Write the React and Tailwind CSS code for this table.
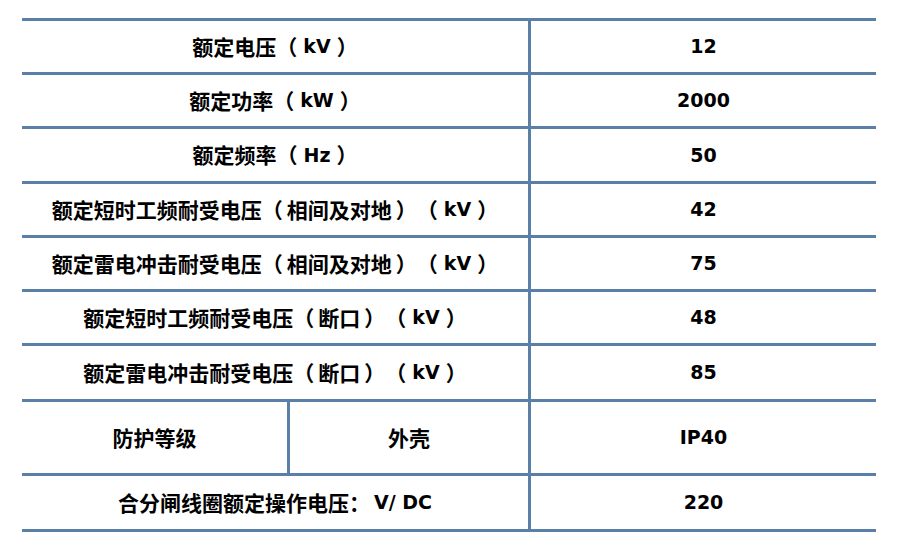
import React from "react";

const rows = [
  { label: "额定电压（kV）", value: "12", h: "h-[54px]" },
  { label: "额定功率（kW）", value: "2000", h: "h-[54px]" },
  { label: "额定频率（Hz）", value: "50", h: "h-[55px]" },
  { label: "额定短时工频耐受电压（相间及对地）（kV）", value: "42", h: "h-[54px]" },
  { label: "额定雷电冲击耐受电压（相间及对地）（kV）", value: "75", h: "h-[54px]" },
  { label: "额定短时工频耐受电压（断口）（kV）", value: "48", h: "h-[54px]" },
  { label: "额定雷电冲击耐受电压（断口）（kV）", value: "85", h: "h-[56px]" },
];

const latin = { fontFamily: '"DejaVu Sans", sans-serif', fontSize: "19px" };

// text inside （） gets some air; latin bits use DejaVu (Verdana-like)
function Label({ text }) {
  const parts = text.split(/（([^）]*)）/);
  return parts.map((part, i) => {
    if (i % 2 === 0) return part;
    const isLatin = /^[A-Za-z0-9/ ]+$/.test(part);
    return (
      <React.Fragment key={i}>
        （
        {isLatin ? (
          <span style={latin} className="px-[6px]">
            {part}
          </span>
        ) : (
          <span className="px-[4px]">{part}</span>
        )}
        ）
      </React.Fragment>
    );
  });
}

export default function App() {
  return (
    <div
      className="w-[903px] h-[559px] bg-white pt-[18px] pl-[22px] text-[21px] font-bold text-black [text-spacing-trim:space-all]"
      style={{ fontFamily: '"Noto Sans CJK SC", "Noto Sans CJK JP", sans-serif' }}
    >
      <div className="w-[854px] border-t-[3px] border-[#5b80a8]">
        {rows.map((r) => (
          <div key={r.label} className={`flex border-b-[3px] border-[#5b80a8] ${r.h}`}>
            <div className="w-[509px] flex items-center justify-center border-r-[3px] border-[#5b80a8]">
              <Label text={r.label} />
            </div>
            <div className="flex-1 flex items-center justify-center" style={latin}>
              {r.value}
            </div>
          </div>
        ))}
        <div className="flex border-b-[3px] border-[#5b80a8] h-[74px]">
          <div className="w-[268px] flex items-center justify-center border-r-[3px] border-[#5b80a8]">
            防护等级
          </div>
          <div className="w-[241px] flex items-center justify-center border-r-[3px] border-[#5b80a8]">
            外壳
          </div>
          <div className="flex-1 flex items-center justify-center" style={latin}>
            IP40
          </div>
        </div>
        <div className="flex border-b-[3px] border-[#5b80a8] h-[56px]">
          <div className="w-[509px] flex items-center justify-center border-r-[3px] border-[#5b80a8]">
            合分闸线圈额定操作电压：
            <span style={latin} className="pl-[4px]">
              V/ DC
            </span>
          </div>
          <div className="flex-1 flex items-center justify-center" style={latin}>
            220
          </div>
        </div>
      </div>
    </div>
  );
}
